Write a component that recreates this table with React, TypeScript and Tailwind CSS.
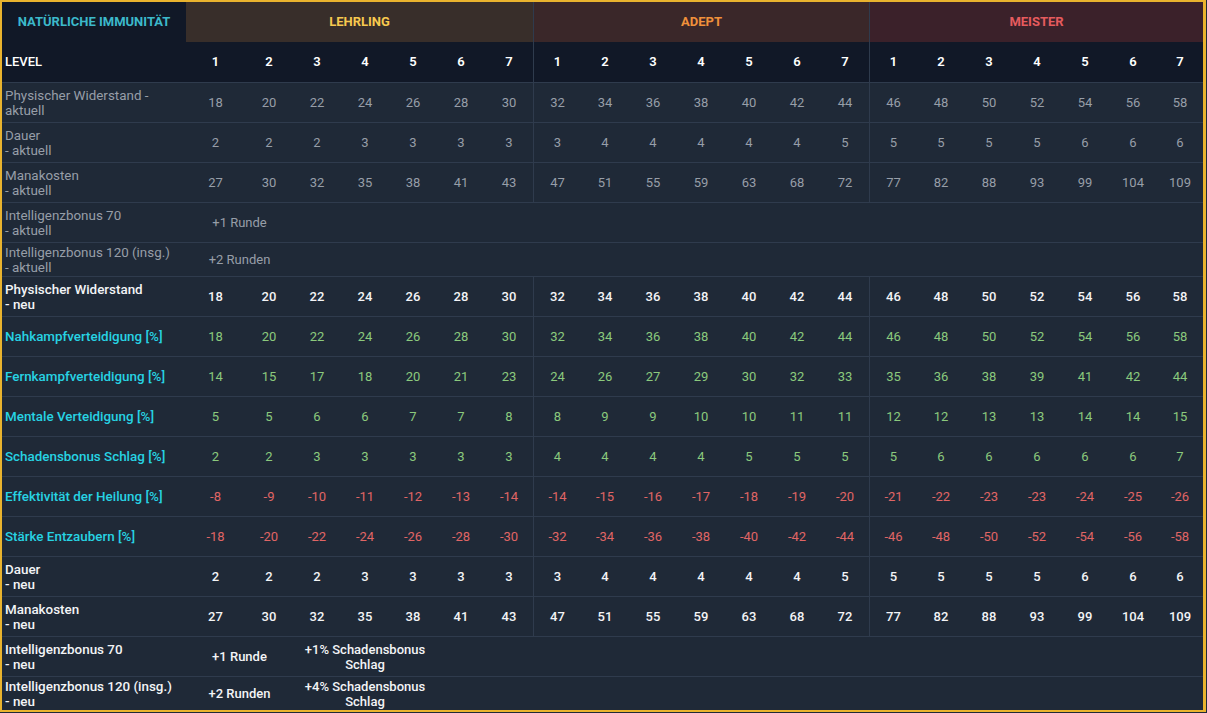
const lehrling = [1, 2, 3, 4, 5, 6, 7];

type Kind = 'old' | 'new' | 'pct';

type Row = {
  label: string[];
  kind: Kind;
  values?: number[];
  bonus?: string[];
  short?: boolean;
};

const rows: Row[] = [
  { label: ['Physischer Widerstand -', 'aktuell'], kind: 'old', values: [18, 20, 22, 24, 26, 28, 30, 32, 34, 36, 38, 40, 42, 44, 46, 48, 50, 52, 54, 56, 58] },
  { label: ['Dauer', '- aktuell'], kind: 'old', values: [2, 2, 2, 3, 3, 3, 3, 3, 4, 4, 4, 4, 4, 5, 5, 5, 5, 5, 6, 6, 6] },
  { label: ['Manakosten', '- aktuell'], kind: 'old', values: [27, 30, 32, 35, 38, 41, 43, 47, 51, 55, 59, 63, 68, 72, 77, 82, 88, 93, 99, 104, 109] },
  { label: ['Intelligenzbonus 70', '- aktuell'], kind: 'old', bonus: ['+1 Runde'] },
  { label: ['Intelligenzbonus 120 (insg.)', '- aktuell'], kind: 'old', bonus: ['+2 Runden'], short: true },
  { label: ['Physischer Widerstand', '- neu'], kind: 'new', values: [18, 20, 22, 24, 26, 28, 30, 32, 34, 36, 38, 40, 42, 44, 46, 48, 50, 52, 54, 56, 58] },
  { label: ['Nahkampfverteidigung [%]'], kind: 'pct', values: [18, 20, 22, 24, 26, 28, 30, 32, 34, 36, 38, 40, 42, 44, 46, 48, 50, 52, 54, 56, 58] },
  { label: ['Fernkampfverteidigung [%]'], kind: 'pct', values: [14, 15, 17, 18, 20, 21, 23, 24, 26, 27, 29, 30, 32, 33, 35, 36, 38, 39, 41, 42, 44] },
  { label: ['Mentale Verteidigung [%]'], kind: 'pct', values: [5, 5, 6, 6, 7, 7, 8, 8, 9, 9, 10, 10, 11, 11, 12, 12, 13, 13, 14, 14, 15] },
  { label: ['Schadensbonus Schlag [%]'], kind: 'pct', values: [2, 2, 3, 3, 3, 3, 3, 4, 4, 4, 4, 5, 5, 5, 5, 6, 6, 6, 6, 6, 7] },
  { label: ['Effektivität der Heilung [%]'], kind: 'pct', values: [-8, -9, -10, -11, -12, -13, -14, -14, -15, -16, -17, -18, -19, -20, -21, -22, -23, -23, -24, -25, -26] },
  { label: ['Stärke Entzaubern [%]'], kind: 'pct', values: [-18, -20, -22, -24, -26, -28, -30, -32, -34, -36, -38, -40, -42, -44, -46, -48, -50, -52, -54, -56, -58] },
  { label: ['Dauer', '- neu'], kind: 'new', values: [2, 2, 2, 3, 3, 3, 3, 3, 4, 4, 4, 4, 4, 5, 5, 5, 5, 5, 6, 6, 6] },
  { label: ['Manakosten', '- neu'], kind: 'new', values: [27, 30, 32, 35, 38, 41, 43, 47, 51, 55, 59, 63, 68, 72, 77, 82, 88, 93, 99, 104, 109] },
  { label: ['Intelligenzbonus 70', '- neu'], kind: 'new', bonus: ['+1 Runde', '+1% Schadensbonus Schlag'] },
  { label: ['Intelligenzbonus 120 (insg.)', '- neu'], kind: 'new', bonus: ['+2 Runden', '+4% Schadensbonus Schlag'], short: true },
];

const grid = 'grid grid-cols-[184px_59px_repeat(19,48px)_46px]';

const labelColor: Record<Kind, string> = {
  old: 'text-[#979ea8]',
  new: 'text-[#f3f4f6] font-medium',
  pct: 'text-[#27d3e3] font-medium',
};

function valueColor(kind: Kind, v: number) {
  if (kind === 'old') return 'text-[#979ea8]';
  if (kind === 'new') return 'text-[#f3f4f6] font-medium';
  return v < 0 ? 'text-[#e06565]' : 'text-[#8bc97d]';
}

function DataRow({ row }: { row: Row }) {
  return (
    <div className={`${grid} border-t border-[#2f3b4d] ${row.short ? 'h-[34px]' : 'h-[40px]'}`}>
      <div className={`flex flex-col justify-center pl-[3px] text-[13.4px] leading-[15px] whitespace-nowrap ${labelColor[row.kind]}`}>
        {row.label.map((l) => (
          <span key={l}>{l}</span>
        ))}
      </div>
      {row.values &&
        row.values.map((v, i) => (
          <div
            key={i}
            className={`flex items-center justify-center ${i === 7 || i === 14 ? 'border-l border-[#2f3b4d]' : ''} ${valueColor(row.kind, v)}`}
          >
            {v}
          </div>
        ))}
      {row.bonus && (
        <>
          <div className={`col-span-2 flex items-center justify-center ${row.kind === 'old' ? 'text-[#979ea8]' : 'text-[#f3f4f6] font-medium'}`}>
            {row.bonus[0]}
          </div>
          {row.bonus[1] && (
            <div className="col-span-3 flex items-center justify-center text-center leading-[15px] text-[#f3f4f6] font-medium">
              {row.bonus[1]}
            </div>
          )}
        </>
      )}
    </div>
  );
}

export default function App() {
  return (
    <div className="min-h-screen bg-[#1f2937] font-['Roboto',sans-serif] text-[13px]">
      <div className="w-[1206px] border-t-2 border-l-2 border-b-2 border-r-[3px] border-[#e9b32e] bg-[#1f2937]">
        <div className={`${grid} h-[40px] text-[13px] font-bold uppercase`}>
          <div className="flex items-center justify-center bg-[#111827] text-[#3cb9cb]">Natürliche Immunität</div>
          <div className="col-span-7 flex items-center justify-center bg-[#382e2a] text-[#f7c94f]">Lehrling</div>
          <div className="col-span-7 flex items-center justify-center border-l border-[#2f3b4d] bg-[#3a2729] text-[#f0913b]">Adept</div>
          <div className="col-span-7 flex items-center justify-center border-l border-[#2f3b4d] bg-[#3b212a] text-[#e65b5e]">Meister</div>
        </div>
        <div className={`${grid} h-[40px] bg-[#111827] font-semibold text-white`}>
          <div className="flex items-center pl-[3px] font-medium">LEVEL</div>
          {[...lehrling, ...lehrling, ...lehrling].map((n, i) => (
            <div key={i} className={`flex items-center justify-center ${i === 7 || i === 14 ? 'border-l border-[#2f3b4d]' : ''}`}>
              {n}
            </div>
          ))}
        </div>
        {rows.map((r, i) => (
          <DataRow key={i} row={r} />
        ))}
      </div>
    </div>
  );
}
